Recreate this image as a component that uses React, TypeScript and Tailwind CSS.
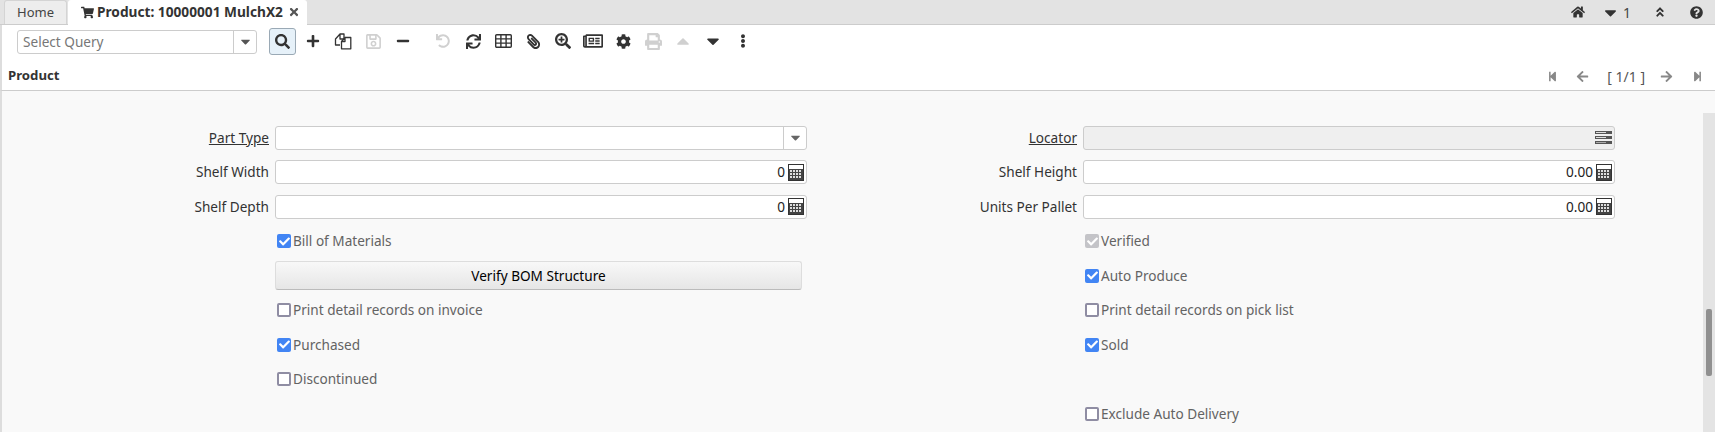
import * as React from "react";
import {
  FaShoppingCart,
  FaTimes,
  FaSearch,
  FaPlus,
  FaRegSave,
  FaMinus,
  FaUndo,
  FaSync,
  FaPaperclip,
  FaSearchPlus,
  FaRegNewspaper,
  FaCog,
  FaPrint,
  FaCaretUp,
  FaCaretDown,
  FaEllipsisV,
  FaHome,
  FaAngleDoubleUp,
  FaQuestionCircle,
  FaStepBackward,
  FaStepForward,
  FaArrowLeft,
  FaArrowRight,
  FaCheck,
} from "react-icons/fa";

const CalcIcon = () => (
  <svg width="16" height="17" viewBox="0 0 16 17" className="shrink-0">
    <rect x="0.5" y="0.5" width="15" height="16" fill="#fff" stroke="#333" />
    <rect x="1" y="5" width="14" height="11" fill="#444" />
    {[3, 6, 9, 12].map((x) =>
      [6, 9, 12].map((y) => (
        <rect key={`${x}-${y}`} x={x - 1} y={y} width="2" height="2" fill="#ddd" />
      ))
    )}
  </svg>
);

const LocatorIcon = () => (
  <svg width="17" height="13" viewBox="0 0 17 13" className="shrink-0">
    <rect x="0" y="0" width="17" height="3" fill="#555" />
    <rect x="1" y="1" width="10" height="1" fill="#ddd" />
    <rect x="0" y="5" width="17" height="3" fill="#555" />
    <rect x="1" y="6" width="10" height="1" fill="#ddd" />
    <rect x="0" y="10" width="17" height="3" fill="#555" />
    <rect x="1" y="11" width="10" height="1" fill="#aaa" />
  </svg>
);

const TableIcon = () => (
  <svg width="17" height="14" viewBox="0 0 17 14" fill="none" stroke="#333" strokeWidth="1.4">
    <rect x="0.7" y="0.7" width="15.6" height="12.6" rx="1" />
    <path d="M0.7 4.9H16.3M0.7 9.1H16.3M5.9 0.7V13.3M11.1 0.7V13.3" />
  </svg>
);

const FilesIcon = () => (
  <svg width="18" height="17" viewBox="0 0 18 17" fill="none" stroke="#333" strokeWidth="1.3" strokeLinejoin="round">
    <path d="M6 1H10V6H6ZM6 1L1.5 6V12H6" />
    <path d="M11 4.5H16.8V15.8H7.5V8.5L11 4.5V8.5H7.5" fill="#fff" />
  </svg>
);

const Check = ({
  label,
  state,
}: {
  label: string;
  state: "on" | "off" | "disabled";
}) => (
  <div className="flex items-center gap-[2px] pl-[2px] text-[#636363]">
    {state === "off" ? (
      <span className="w-[14px] h-[14px] bg-white border-2 border-[#8f8da3] rounded-[2px]" />
    ) : (
      <span
        className={
          state === "on"
            ? "w-[14px] h-[14px] bg-[#4285f4] rounded-[2px] flex items-center justify-center"
            : "w-[14px] h-[14px] bg-[#c4c4c8] rounded-[2px] flex items-center justify-center"
        }
      >
        <FaCheck size={11} color="#fff" />
      </span>
    )}
    <span>{label}</span>
  </div>
);

const Label = ({ text, underline }: { text: string; underline?: boolean }) => (
  <div className="pr-[6px] text-right text-[#333]">
    <span className={underline ? "underline" : ""}>{text}</span>
  </div>
);

const NumberField = ({ value }: { value: string }) => (
  <div className="h-[24px] bg-white border border-[#ccc] rounded-[3px] flex items-center justify-end pr-[2px] gap-[3px] text-[#222]">
    <span>{value}</span>
    <CalcIcon />
  </div>
);

const ToolButton = ({
  children,
  muted,
}: {
  children: React.ReactNode;
  muted?: boolean;
}) => (
  <div
    className={
      muted
        ? "w-[30px] flex justify-center text-[#d0d0d0]"
        : "w-[30px] flex justify-center text-[#333]"
    }
  >
    {children}
  </div>
);

export default function App() {
  return (
    <div
      className="w-[1715px] h-[432px] overflow-hidden bg-white flex flex-col text-[13.6px]"
      style={{ fontFamily: '"Noto Sans", sans-serif' }}
    >
      {/* tabs */}
      <div className="h-[25px] shrink-0 bg-[#e3e3e3] border-b border-[#ccc] flex items-end pl-[4px]">
        <div className="w-[63px] h-[24px] bg-[#ededed] border border-b-0 border-[#d4d4d4] rounded-t-[3px] flex items-center justify-center text-[#444] text-[13px]">
          Home
        </div>
        <div className="relative top-[1px] ml-[1px] w-[239px] h-[25px] bg-white rounded-t-[3px] flex items-center pl-[13px] text-[#333] font-bold text-[13.7px]">
          <FaShoppingCart size={13} className="mr-[3px]" />
          <span>Product: 10000001 MulchX2</span>
          <FaTimes size={12} className="absolute left-[220px] top-[6px] text-[#555]" />
        </div>
        <div className="ml-auto flex items-center h-full text-[#333] text-[14px]">
          <FaHome size={14} className="mr-[16px]" />
          <FaCaretDown size={19} className="mr-[3px]" />
          <span className="mr-[23px] text-[#444]">1</span>
          <FaAngleDoubleUp size={12} className="mr-[24px]" />
          <FaQuestionCircle size={13} className="mr-[12px]" />
        </div>
      </div>

      {/* toolbar */}
      <div className="h-[35px] shrink-0 flex items-center pl-[17px] pb-[3px] border-l-2 border-[#ddd]">
        <div className="w-[240px] h-[24px] mt-[1px] border border-[#ccc] rounded-[3px] flex ml-[-2px]">
          <div className="flex-1 pl-[5px] text-[#777] text-[13.6px] leading-[22px]">Select Query</div>
          <div className="w-[23px] border-l border-[#ccc] flex items-center justify-center text-[#555]">
            <FaCaretDown size={15} />
          </div>
        </div>
        <div className="w-[27px] h-[27px] ml-[12px] mr-[2px] bg-[#e6f1f9] border border-[#9aa9b5] rounded-[3px] flex items-center justify-center text-[#333]">
          <FaSearch size={15} />
        </div>
        <ToolButton><FaPlus size={14} /></ToolButton>
        <ToolButton><FilesIcon /></ToolButton>
        <ToolButton muted><FaRegSave size={17} /></ToolButton>
        <ToolButton><FaMinus size={14} /></ToolButton>
        <div className="w-[10px]" />
        <ToolButton muted><FaUndo size={14} /></ToolButton>
        <ToolButton><FaSync size={15} /></ToolButton>
        <ToolButton><TableIcon /></ToolButton>
        <ToolButton><FaPaperclip size={15} className="-scale-x-100" /></ToolButton>
        <ToolButton><FaSearchPlus size={16} /></ToolButton>
        <ToolButton><FaRegNewspaper size={20} /></ToolButton>
        <ToolButton><FaCog size={15} /></ToolButton>
        <ToolButton muted><FaPrint size={17} /></ToolButton>
        <ToolButton muted><FaCaretUp size={20} /></ToolButton>
        <ToolButton><FaCaretDown size={20} /></ToolButton>
        <ToolButton><FaEllipsisV size={14} /></ToolButton>
      </div>

      {/* title bar */}
      <div className="h-[31px] shrink-0 border-b border-[#ccc] border-l-2 border-l-[#ddd] flex items-center pl-[6px] pr-[12px] pt-[2px] text-[#333]">
        <span className="font-bold text-[13.2px]">Product</span>
        <div className="ml-auto flex items-center text-[#888]">
          <FaStepBackward size={11} className="mr-[18px]" />
          <FaArrowLeft size={13} className="mr-[18px]" />
          <span className="text-[#555] text-[14px] mr-[15px]">[ 1/1 ]</span>
          <FaArrowRight size={13} className="mr-[19px]" />
          <FaStepForward size={11} />
        </div>
      </div>

      {/* form */}
      <div className="flex-1 min-h-0 flex bg-[#f9f9f9] border-l-2 border-[#ddd]">
        <div className="flex-1 pt-[29.5px]">
          <div className="grid grid-cols-[273px_532px_276px_532px] auto-rows-[34.5px] items-center">
            <Label text="Part Type" underline />
            <div className="h-[24px] bg-white border border-[#ccc] rounded-[3px] flex justify-end">
              <div className="w-[23px] border-l border-[#ccc] flex items-center justify-center text-[#666]">
                <FaCaretDown size={15} />
              </div>
            </div>
            <Label text="Locator" underline />
            <div className="h-[24px] bg-[#efefef] border border-[#ccc] rounded-[3px] flex items-center justify-end pr-[2px]">
              <LocatorIcon />
            </div>

            <Label text="Shelf Width" />
            <NumberField value="0" />
            <Label text="Shelf Height" />
            <NumberField value="0.00" />

            <Label text="Shelf Depth" />
            <NumberField value="0" />
            <Label text="Units Per Pallet" />
            <NumberField value="0.00" />

            <div />
            <Check label="Bill of Materials" state="on" />
            <div />
            <Check label="Verified" state="disabled" />

            <div />
            <div className="w-[527px] h-[29px] bg-linear-to-b from-[#f8f8f8] to-[#e6e6e6] border border-[#ddd] border-b-[#bbb] rounded-[3px] flex items-center justify-center text-black">
              Verify BOM Structure
            </div>
            <div />
            <Check label="Auto Produce" state="on" />

            <div />
            <Check label="Print detail records on invoice" state="off" />
            <div />
            <Check label="Print detail records on pick list" state="off" />

            <div />
            <Check label="Purchased" state="on" />
            <div />
            <Check label="Sold" state="on" />

            <div />
            <Check label="Discontinued" state="off" />
            <div />
            <div />

            <div />
            <div />
            <div />
            <Check label="Exclude Auto Delivery" state="off" />
          </div>
        </div>
        <div className="w-[12px] mt-[22px] bg-[#e4e4e4] pt-[196px] flex justify-center">
          <div className="w-[6px] h-[67px] bg-[#909090] rounded-[2px]" />
        </div>
      </div>
    </div>
  );
}
